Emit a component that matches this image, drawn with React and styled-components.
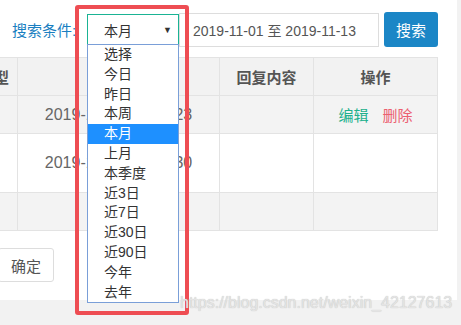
import React from "react";
import styled, { createGlobalStyle } from "styled-components";

const GlobalStyle = createGlobalStyle`
  html, body {
    margin: 0;
    padding: 0;
    background: #f2f2f2;
    overflow: hidden;
  }
  body {
    font-family: "Liberation Sans", "Noto Sans CJK SC", sans-serif;
  }
`;

const Screen = styled.div`
  position: relative;
  width: 461px;
  height: 325px;
  overflow: hidden;
`;

const Panel = styled.div`
  width: 457px;
  height: 300px;
  background: #ffffff;
  padding-top: 12px;
  box-sizing: border-box;
`;

const SearchBar = styled.div`
  display: flex;
  align-items: center;
  padding-left: 12px;
  height: 35px;
`;

const Label = styled.span`
  font-size: 15px;
  color: #1a7fc1;
  width: 75px;
  white-space: nowrap;
`;

const Select = styled.div`
  display: flex;
  align-items: center;
  justify-content: space-between;
  width: 92px;
  height: 31px;
  box-sizing: border-box;
  border: 1px solid #1ab394;
  padding: 0 6px 0 16px;
  font-size: 14px;
  color: #333;
  background: #fff;
  position: relative;
  z-index: 1;
`;

const Arrow = styled.span`
  font-size: 9px;
  color: #333;
`;

const DateInput = styled.div`
  display: flex;
  align-items: center;
  width: 200px;
  height: 34px;
  box-sizing: border-box;
  border: 1px solid #dddddd;
  padding-left: 13px;
  font-size: 14px;
  color: #555;
`;

const SearchButton = styled.button`
  margin-left: 5px;
  width: 54px;
  height: 35px;
  border: none;
  border-radius: 3px;
  background: #1b86c6;
  color: #fff;
  font-family: "Liberation Sans", "Noto Sans CJK SC", sans-serif;
  font-size: 15px;
  padding: 0;
`;

const Table = styled.table`
  margin-top: 10px;
  margin-left: -60px;
  width: 497px;
  border-collapse: collapse;
  table-layout: fixed;
  font-size: 15px;
`;

const HeadCell = styled.th`
  height: 37px;
  padding: 0;
  background: #f2f2f2;
  border: 1px solid #e3e3e3;
  color: #555;
  font-weight: bold;
  text-align: center;
`;

const Row = styled.tr`
  background: ${(p) => (p.$striped ? "#f3f3f3" : "#ffffff")};
  height: ${(p) => p.$h}px;
`;

const Cell = styled.td`
  padding: 0;
  border: 1px solid #e3e3e3;
  color: #666;
  font-size: ${(p) => (p.$time ? "16px" : "15px")};
  text-align: center;
  white-space: nowrap;
  overflow: hidden;
`;

const Action = styled.span`
  color: ${(p) => (p.$danger ? "#ec6070" : "#21b08c")};
  margin: 0 7px;
`;

const Footer = styled.div`
  margin-top: 17px;
  margin-left: -2px;
`;

const ConfirmButton = styled.button`
  width: 56px;
  height: 34px;
  border: 1px solid #dddddd;
  border-radius: 3px;
  background: #fff;
  color: #555;
  font-family: "Liberation Sans", "Noto Sans CJK SC", sans-serif;
  font-size: 15px;
  padding: 0;
`;

const Options = styled.ul`
  position: absolute;
  left: 87px;
  top: 44px;
  width: 92px;
  margin: 0;
  padding: 0;
  list-style: none;
  box-sizing: border-box;
  border: 1px solid #7a9fd8;
  background: #fff;
  z-index: 2;
`;

const Option = styled.li`
  height: 19.8px;
  line-height: 19.8px;
  padding-left: 16px;
  font-size: 14px;
  color: ${(p) => (p.$active ? "#fff" : "#333")};
  background: ${(p) => (p.$active ? "#1e90ff" : "transparent")};
`;

const Marker = styled.div`
  position: absolute;
  left: 75px;
  top: 5px;
  width: 114px;
  height: 310px;
  box-sizing: border-box;
  border: 4px solid #ee4d53;
  border-radius: 3px;
  z-index: 3;
`;

const Watermark = styled.div`
  position: absolute;
  left: 180px;
  top: 294px;
  font-family: "Liberation Sans", sans-serif;
  font-size: 16px;
  color: #e4e4e4;
  text-shadow: 0 0 1px #b8b8b8;
  z-index: 4;
`;

const ranges = ["选择", "今日", "昨日", "本周", "本月", "上月", "本季度", "近3日", "近7日", "近30日", "近90日", "今年", "去年"];

const rows = [
  { time: "2019-11-13 14:20:23", h: 38, striped: true, actions: true },
  { time: "2019-11-12 09:15:30", h: 59, striped: false, actions: false },
  { time: "", h: 38, striped: true, actions: false },
];

export default function App() {
  return (
    <Screen>
      <GlobalStyle />
      <Panel>
        <SearchBar>
          <Label>搜索条件:</Label>
          <Select>
            本月
            <Arrow>▼</Arrow>
          </Select>
          <DateInput>2019-11-01 至 2019-11-13</DateInput>
          <SearchButton>搜索</SearchButton>
        </SearchBar>
        <Table>
          <colgroup>
            <col style={{ width: 77 }} />
            <col style={{ width: 202 }} />
            <col style={{ width: 94 }} />
            <col style={{ width: 124 }} />
          </colgroup>
          <thead>
            <tr>
              <HeadCell>回复类型</HeadCell>
              <HeadCell>回复时间</HeadCell>
              <HeadCell>回复内容</HeadCell>
              <HeadCell>操作</HeadCell>
            </tr>
          </thead>
          <tbody>
            {rows.map((r, i) => (
              <Row key={i} $striped={r.striped} $h={r.h}>
                <Cell />
                <Cell $time>{r.time}</Cell>
                <Cell />
                <Cell>
                  {r.actions && (
                    <>
                      <Action>编辑</Action>
                      <Action $danger>删除</Action>
                    </>
                  )}
                </Cell>
              </Row>
            ))}
          </tbody>
        </Table>
        <Footer>
          <ConfirmButton>确定</ConfirmButton>
        </Footer>
      </Panel>
      <Options>
        {ranges.map((r) => (
          <Option key={r} $active={r === "本月"}>
            {r}
          </Option>
        ))}
      </Options>
      <Marker />
      <Watermark>https://blog.csdn.net/weixin_42127613</Watermark>
    </Screen>
  );
}
